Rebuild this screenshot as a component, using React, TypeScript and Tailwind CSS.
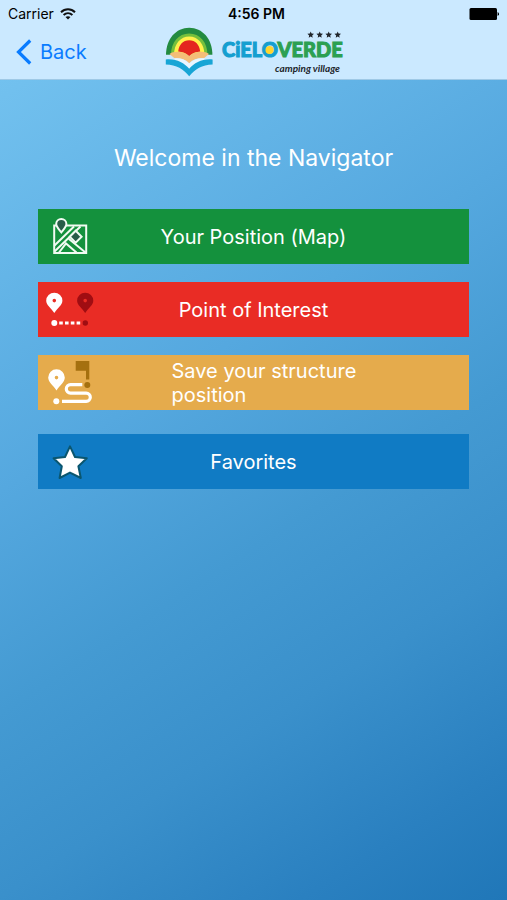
import type { ReactNode } from "react";

interface MenuButtonProps {
  icon: ReactNode;
  label: string;
  color: string;
  labelClassName?: string;
}

function MapIcon() {
  return (
    <svg viewBox="0 0 49 47" className="h-[47px] w-[49px]" fill="none" stroke="#f1fbf2" strokeWidth="2" aria-hidden="true">
      <path d="M12 12.5H8.2V40H40.2V12.5H19" />
      <path d="M8.5 32.5L28 13.5M8.5 38.5L34.5 13.5M13 39.5L20 30.5L30.5 39.5M23 26L39.5 39.5" />
      <path d="M29.7 17.8L35.6 23.8L29.7 29.6L23.8 23.8Z" fill="#285c48" />
      <path d="M15.3 19.3C12.5 15.8 10.2 13.6 10.2 11A5.1 5.1 0 0 1 20.4 11C20.4 13.6 18.1 15.8 15.3 19.3Z" fill="#285c48" />
    </svg>
  );
}

function RouteIcon() {
  return (
    <svg viewBox="0 0 49 47" className="h-[47px] w-[49px]" fill="#fff" aria-hidden="true">
      <path fillRule="evenodd" d="M8.3 27C5 22 0.2 19 0.2 14.8A8.1 8.1 0 0 1 16.4 14.8C16.4 19 11.6 22 8.3 27ZM8.3 12.8A1.8 1.8 0 1 0 8.3 16.4A1.8 1.8 0 1 0 8.3 12.8Z" />
      <path fillRule="evenodd" fill="#a00d12" d="M39.2 27C35.9 22 31.1 19 31.1 14.8A8.1 8.1 0 0 1 47.3 14.8C47.3 19 42.5 22 39.2 27ZM39.2 12.8A1.8 1.8 0 1 0 39.2 16.4A1.8 1.8 0 1 0 39.2 12.8Z" />
      <circle cx="8.3" cy="37" r="3" />
      <path d="M13.2 35.4h3.6v3.2h-3.6zM19 35.4h3.6v3.2H19zM24.8 35.4h3.6v3.2h-3.6zM30.6 35.4h3.6v3.2h-3.6z" />
      <circle cx="39.3" cy="37" r="2.7" fill="#a00d12" />
    </svg>
  );
}

function SavePositionIcon() {
  return (
    <svg viewBox="0 0 49 47" className="h-[47px] w-[49px]" fill="#fff" aria-hidden="true">
      <path fillRule="evenodd" d="M10.5 31.4C7 26.4 2.2 23 2.2 18.6A8.3 8.3 0 0 1 18.8 18.6C18.8 23 14 26.4 10.5 31.4ZM10.5 16.8A1.8 1.8 0 1 0 10.5 20.4A1.8 1.8 0 1 0 10.5 16.8Z" />
      <path fill="#a5700f" d="M29.7 2H43.3V20.6H40V11.8H29.7Z" />
      <circle cx="41.3" cy="26" r="3" fill="#a5700f" />
      <circle cx="10.3" cy="42.2" r="3" />
      <path d="M36.3 25.7H24.5A4.2 4.2 0 0 0 24.5 34.1H40.2A4.1 4.1 0 0 1 40.2 42.3H16" fill="none" stroke="#fff" strokeWidth="3.2" />
    </svg>
  );
}

function StarIcon() {
  return (
    <svg viewBox="0 0 49 47" className="h-[47px] w-[49px]" aria-hidden="true">
      <path d="M24 8.4L29 19L40.8 20.2L32.4 28.2L34.8 40L24 34.6L13.6 40L15.8 28.2L7.6 20.2L19 19Z" fill="#fff" stroke="#0a566f" strokeWidth="2" strokeLinejoin="round" />
    </svg>
  );
}

function Logo() {
  return (
    <svg viewBox="0 0 180 54" className="h-[54px] w-[180px]" role="img" aria-label="Cieloverde camping village">
      <path d="M2 29.8C2 14 12 2.7 25.2 2.7S48.4 14 48.4 29.8Z" fill="#238b40" />
      <path d="M7 29.8C7 17 14.5 8.4 25.2 8.4S43.4 17 43.4 29.8Z" fill="#75bf3c" />
      <path d="M10 29.8C10 19 16.5 11.6 25.2 11.6S40.4 19 40.4 29.8Z" fill="#fff04a" />
      <path d="M14.2 26.5C15 19.5 19 15.2 25.2 15.2S35.4 19.5 36.2 26.5C32.5 26.8 28 28 25.2 31.5C22 28 18.5 26.8 14.2 26.5Z" fill="#e4251f" />
      <path d="M5.5 29C9.5 25.7 19.5 25.7 25.2 31C31 25.7 41 25.7 45 29L40 33.2C34 33 29 34 25.2 38.2C21.5 34 16 33 10.5 33.2Z" fill="#f4bd78" />
      <path d="M10 33.5C16 32.7 21 34.3 25.2 38.6C29.5 34.3 35 32.7 41 33.5L35 39C30 39.5 27.5 41 25.2 43.6C23 41 19.5 39.5 15 39Z" fill="#e8f6ff" />
      <path d="M1.8 34.4C12 33.4 20 37.5 25.2 43.8C30.5 37.5 38.5 33.4 48.6 34.4V39.4C38 39.7 31 44 25.2 51.3C19.5 44 12.5 39.7 1.8 39.4Z" fill="#18a5d5" />
      <text x="58" y="32" fontFamily="Lato, sans-serif" fontWeight="900" fontSize="20" fill="#159fd0" stroke="#159fd0" strokeWidth="1">
        CiELO<tspan fill="#2ca052" stroke="#2ca052">VERDE</tspan>
      </text>
      <circle cx="105.5" cy="25" r="4" fill="#ffd52e" />
      <g fill="#20252b">
        <path id="logo-star" d="M146.7 6.4L147.6 8.5L150 8.8L148.2 10.4L148.7 12.8L146.7 11.5L144.7 12.8L145.2 10.4L143.4 8.8L145.8 8.5Z" />
        <use href="#logo-star" x="9" />
        <use href="#logo-star" x="18" />
        <use href="#logo-star" x="27" />
      </g>
      <text x="176" y="47" textAnchor="end" fontFamily="Lato, sans-serif" fontStyle="italic" fontWeight="700" fontSize="10" fill="#20252b">
        camping village
      </text>
    </svg>
  );
}

function Header() {
  return (
    <header className="border-b border-[#9fc9e6] bg-[#cbe9ff]">
      <div className="grid grid-cols-3 items-center px-2 pt-1 text-black">
        <div className="flex items-center gap-1.5">
          <span className="text-sm leading-5">Carrier</span>
          <svg viewBox="0 0 16 12" className="h-3 w-4" fill="none" stroke="#111" strokeWidth="2" aria-hidden="true">
            <path d="M1 4.2C5 0.3 11 0.3 15 4.2M3.6 7C6.2 4.6 9.8 4.6 12.4 7" />
            <path d="M8 11.6L5.5 9.1C6.9 7.9 9.1 7.9 10.5 9.1Z" fill="#111" stroke="none" />
          </svg>
        </div>
        <span className="pl-1.5 text-center text-sm leading-5 font-semibold">4:56 PM</span>
        <svg viewBox="0 0 30 12" className="h-3 w-[30px] justify-self-end" aria-hidden="true">
          <rect x="0.5" width="27.5" height="12" rx="1.5" />
          <path d="M28.6 4C30.5 4.8 30.5 7.2 28.6 8Z" />
        </svg>
      </div>
      <div className="grid grid-cols-[1fr_auto_1fr] items-center px-4 pt-px">
        <button type="button" className="flex items-center gap-2 justify-self-start text-xl leading-6 text-[#0a7cff]">
          <svg viewBox="0 0 16 26" className="h-[26px] w-4" fill="none" stroke="currentColor" strokeWidth="3.2" aria-hidden="true">
            <path d="M14.2 1.5L2.5 13L14.2 24.5" />
          </svg>
          Back
        </button>
        <Logo />
      </div>
    </header>
  );
}

function MenuButton({ icon, label, color, labelClassName = "text-center" }: MenuButtonProps) {
  return (
    <button type="button" className={`grid min-h-[55px] w-full grid-cols-[49px_1fr_49px] items-center px-2 text-xl leading-6 text-white ${color}`}>
      {icon}
      <span className={`justify-self-center ${labelClassName}`}>{label}</span>
    </button>
  );
}

export default function App() {
  return (
    <div className="flex min-h-screen flex-col bg-[linear-gradient(147deg,#76c5f2_0%,#71c0ee_8%,#55a8df_40%,#449ad2_58%,#3a90cb_73%,#2a80c0_89%,#2077b8_100%)] font-[Inter,sans-serif]">
      <Header />
      <main className="px-[38px] pt-16">
        <h1 className="text-center text-[23px] leading-7 text-white">Welcome in the Navigator</h1>
        <nav className="mt-[37px] flex flex-col gap-[18px]">
          <MenuButton icon={<MapIcon />} label="Your Position (Map)" color="bg-[#14913d]" />
          <MenuButton icon={<RouteIcon />} label="Point of Interest" color="bg-[#e92c25]" />
          <MenuButton
            icon={<SavePositionIcon />}
            label="Save your structure position"
            color="bg-[#e5ab4c]"
            labelClassName="ml-6 w-[188px] text-left"
          />
          <div className="pt-1.5">
            <MenuButton icon={<StarIcon />} label="Favorites" color="bg-[#107bc4]" />
          </div>
        </nav>
      </main>
    </div>
  );
}
